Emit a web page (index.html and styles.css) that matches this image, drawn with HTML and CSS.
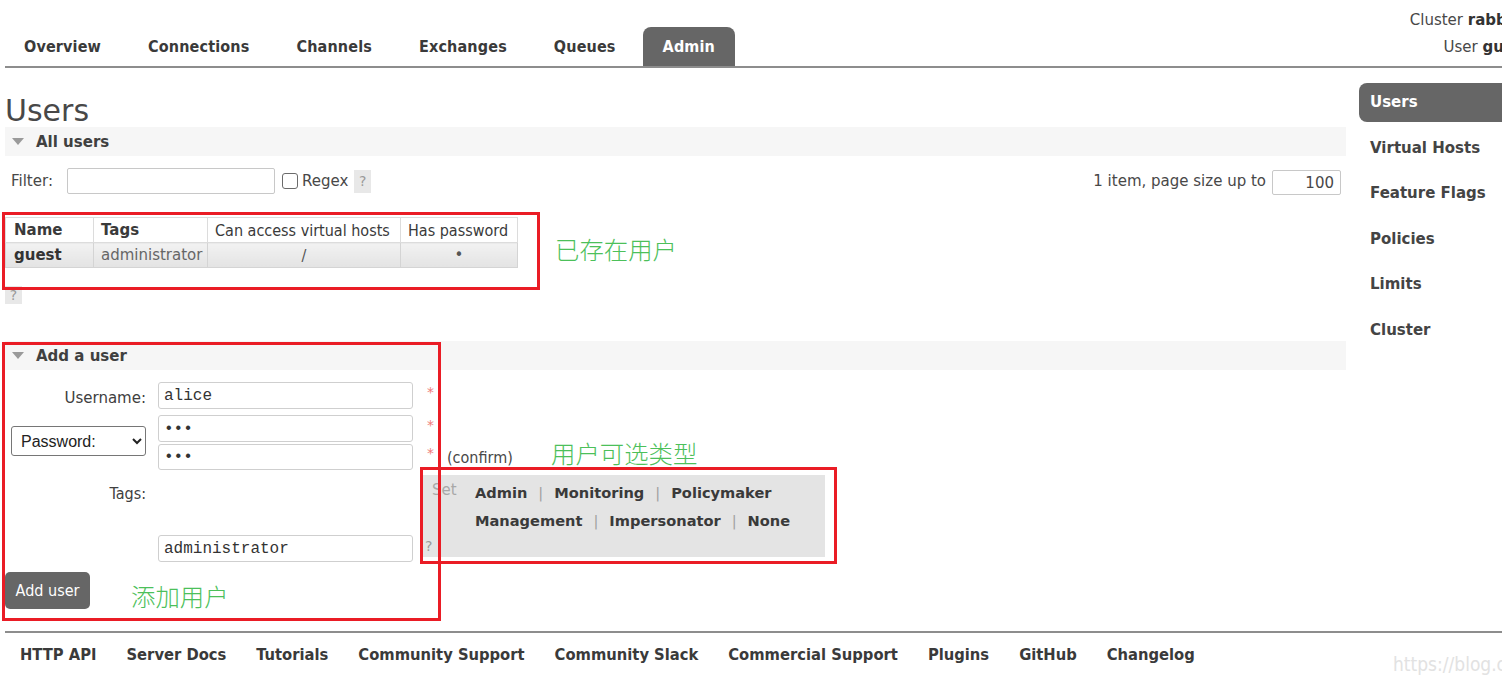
FILE: index.html
```html
<!DOCTYPE html>
<html lang="en">
<head>
<meta charset="utf-8">
<title>RabbitMQ Management - Users</title>
<link rel="stylesheet" href="styles.css">
</head>
<body>
<div class="page">
  <header class="top">
    <ul class="tabs">
      <li>Overview</li>
      <li>Connections</li>
      <li>Channels</li>
      <li>Exchanges</li>
      <li>Queues</li>
      <li class="active">Admin</li>
    </ul>
    <div class="login">
      <div class="login-line">Cluster <b>rabbit@my-rabbit</b></div>
      <div class="login-line second">User <b>guest</b> Log out</div>
    </div>
  </header>

  <div class="layout">
    <main class="main">
      <h1 class="title">Users</h1>

      <section>
        <h2 class="sec-head"><span class="tri"></span>All users</h2>
        <div class="filter-row">
          <div class="filter-left">
            <span class="filter-label">Filter:</span>
            <input class="filter-input" type="text">
            <span class="chk"></span>
            <span class="regex">Regex</span>
            <span class="help help-tall">?</span>
          </div>
          <div class="filter-right">
            <span>1 item, page size up to</span>
            <input class="page-size" type="text" value="100">
          </div>
        </div>

        <table class="list">
          <thead>
            <tr>
              <th class="c-name">Name</th>
              <th class="c-tags">Tags</th>
              <th class="c-vh cond">Can access virtual hosts</th>
              <th class="c-pw cond">Has password</th>
            </tr>
          </thead>
          <tbody>
            <tr>
              <td class="strong">guest</td>
              <td class="muted">administrator</td>
              <td class="center cond">/</td>
              <td class="center">&bull;</td>
            </tr>
          </tbody>
        </table>
        <span class="help help-block">?</span>
      </section>

      <section class="add">
        <h2 class="sec-head"><span class="tri"></span>Add a user</h2>
        <div class="form">
          <label class="lbl lbl-user">Username:</label>
          <input class="fld f-user" type="text" value="alice">
          <span class="star s1">*</span>

          <select class="pw-select">
            <option>Password:</option>
            <option>Password hash:</option>
            <option>No password</option>
          </select>
          <input class="fld f-pw1" type="password" value="123">
          <span class="star s2">*</span>
          <input class="fld f-pw2" type="password" value="123">
          <span class="confirm s3"><span class="star">*</span><span class="cond conf-text">(confirm)</span></span>

          <label class="lbl lbl-tags cond">Tags:</label>
          <input class="fld f-tags" type="text" value="administrator">
          <div class="tagbox">
            <span class="set">Set</span>
            <div class="tag-links">
              <span class="tl">Admin</span><span class="sep">|</span><span class="tl">Monitoring</span><span class="sep">|</span><span class="tl">Policymaker</span>
            </div>
            <div class="tag-links row2">
              <span class="tl">Management</span><span class="sep">|</span><span class="tl">Impersonator</span><span class="sep">|</span><span class="tl">None</span>
            </div>
            <span class="tag-help">?</span>
          </div>
        </div>
        <button class="btn cond" type="button">Add user</button>
      </section>
    </main>

    <nav class="side">
      <ul>
        <li class="active">Users</li>
        <li>Virtual Hosts</li>
        <li>Feature Flags</li>
        <li>Policies</li>
        <li>Limits</li>
        <li>Cluster</li>
      </ul>
    </nav>
  </div>

  <footer class="foot">
    <span>HTTP API</span>
    <span>Server Docs</span>
    <span>Tutorials</span>
    <span>Community Support</span>
    <span>Community Slack</span>
    <span>Commercial Support</span>
    <span>Plugins</span>
    <span>GitHub</span>
    <span>Changelog</span>
  </footer>
</div>

<div class="mark box1"></div>
<div class="mark box2"></div>
<div class="mark box3"></div>
<div class="note n1">已存在用户</div>
<div class="note n2">用户可选类型</div>
<div class="note n3">添加用户</div>
<div class="watermark">https://blog.csdn.net/</div>
</body>
</html>
```

FILE: styles.css
```css
* { box-sizing: border-box; }

html, body { margin: 0; padding: 0; }

body {
  width: 1502px;
  height: 684px;
  overflow: hidden;
  position: relative;
  background: #fff;
  color: #484848;
  font-family: "DejaVu Sans", Verdana, sans-serif;
  font-size: 15px;
}

.cond {
  font-family: "DejaVu Sans Condensed", "DejaVu Sans", sans-serif;
  font-stretch: condensed;
  font-size: 16px;
}

.page { padding-left: 5px; }

/* ---------- header ---------- */
.top {
  display: flex;
  height: 68px;
  border-bottom: 2px solid #8d8d8d;
}

.tabs {
  list-style: none;
  margin: 27px 0 0 -1px;
  padding: 0;
  display: flex;
  gap: 7px;
}

.tabs li {
  font-family: "DejaVu Sans Condensed", "DejaVu Sans", sans-serif;
  font-stretch: condensed;
  font-weight: bold;
  font-size: 16px;
  letter-spacing: 0.15px;
  color: #3a3a3a;
  height: 39px;
  line-height: 39px;
  padding: 0 20px;
  border-radius: 8px 8px 0 0;
}

.tabs li.active { background: #666; color: #fff; }

.login {
  flex: none;
  margin-left: auto;
  margin-right: -115px;
  padding-top: 7px;
  display: flex;
  flex-direction: column;
  align-items: flex-end;
  white-space: nowrap;
  line-height: 27px;
}

.login b { color: #333; }
.login-line.second { margin-right: 26px; }

/* ---------- layout ---------- */
.layout {
  display: grid;
  grid-template-columns: 1341px 1fr;
  column-gap: 13px;
}

.title {
  margin: 26px 0 0;
  font-size: 30px;
  font-weight: normal;
  line-height: 33px;
  color: #484848;
}

.sec-head {
  margin: 0;
  height: 29px;
  display: flex;
  align-items: center;
  background: #f6f6f6;
  font-size: 15px;
  font-weight: bold;
  color: #404040;
}

.tri {
  width: 0;
  height: 0;
  border-left: 6px solid transparent;
  border-right: 6px solid transparent;
  border-top: 7px solid #9a9a9a;
  margin: 0 12px 0 7px;
}

/* ---------- filter ---------- */
.filter-row {
  margin-top: 12px;
  height: 26px;
  display: flex;
  justify-content: space-between;
  align-items: center;
  padding: 0 5px 0 6px;
}

.filter-left, .filter-right { display: flex; align-items: center; }

.filter-input {
  width: 208px;
  height: 26px;
  margin-left: 14px;
  border: 1px solid #c8c8c8;
  border-radius: 2px;
}

.chk {
  width: 16px;
  height: 16px;
  margin-left: 7px;
  border: 1px solid #6b6b6b;
  border-radius: 3px;
  background: #fff;
}

.regex { margin-left: 4px; }

.help {
  display: inline-flex;
  align-items: center;
  justify-content: center;
  width: 17px;
  background: #e8e8e8;
  color: #9a9a9a;
  font-size: 14px;
}

.help-tall { height: 23px; margin-left: 6px; }

.page-size {
  width: 69px;
  height: 25px;
  margin: 3px 0 0 6px;
  border: 1px solid #c8c8c8;
  border-radius: 2px;
  text-align: right;
  padding-right: 6px;
  font-family: "DejaVu Sans", sans-serif;
  font-size: 15px;
  color: #484848;
}

/* ---------- table ---------- */
.list {
  margin-top: 23px;
  border-collapse: collapse;
  table-layout: fixed;
  width: 512px;
}

.list th, .list td {
  height: 25px;
  padding: 0 7px;
  border: 1px solid #dcdcdc;
  text-align: left;
  white-space: nowrap;
}

.list th { background: #fff; font-weight: normal; color: #3a3a3a; }
.list th.c-name, .list th.c-tags { font-weight: bold; }
.list th.c-name { width: 88px; padding-left: 8px; }
.list th.c-tags { width: 114px; }
.list th.c-vh { width: 193px; }
.list th.c-pw { width: 117px; }

.list td {
  background: linear-gradient(#f2f2f2, #e3e3e3);
  border-color: #d4d4d4;
}

.list td.strong { font-weight: bold; color: #333; padding-left: 8px; }
.list td.muted { color: #666; }
.list td.center { text-align: center; color: #555; }

.help-block { display: flex; height: 18px; margin-top: 18px; }

/* ---------- add user form ---------- */
.add { margin-top: 37px; }

.form {
  display: grid;
  grid-template-columns: 135px 267px auto;
  padding: 12px 0 0 6px;
  align-items: center;
}

.lbl { text-align: right; color: #404040; }

.fld {
  margin-left: 12px;
  width: 255px;
  height: 27px;
  border: 1px solid #cfcfcf;
  border-radius: 3px;
  padding: 0 5px;
  font-family: "Liberation Mono", "Courier New", monospace;
  font-size: 16px;
  color: #333;
}

.lbl-user { grid-row: 1; grid-column: 1; margin-top: 4px; }
.f-user { grid-row: 1; grid-column: 2; }
.s1 { grid-row: 1; grid-column: 3; }

.pw-select {
  grid-row: 2 / span 2;
  grid-column: 1;
  width: 135px;
  height: 30px;
  margin-top: 3px;
  padding-left: 5px;
  font-family: "Liberation Sans", Arial, sans-serif;
  font-size: 16px;
  color: #222;
  border: 1px solid #767676;
  border-radius: 3px;
  background: #fff;
}

.f-pw1 { grid-row: 2; grid-column: 2; margin-top: 6px; }
.s2 { grid-row: 2; grid-column: 3; margin-top: 6px; }
.f-pw2 { grid-row: 3; grid-column: 2; margin-top: 2px; height: 26px; }
.s3 { grid-row: 3; grid-column: 3; margin-top: 2px; }

.star {
  color: #f07a7a;
  font-size: 14px;
  padding-left: 14px;
  position: relative;
  top: -4px;
}

.confirm { display: flex; align-items: center; }
.confirm .star { padding-left: 0; margin-left: 14px; }
.conf-text { margin-left: 13px; color: #484848; }

.lbl-tags { grid-row: 4; grid-column: 1; align-self: start; margin-top: 14px; }
.f-tags { grid-row: 4; grid-column: 2; align-self: end; }

.tagbox {
  grid-row: 4;
  grid-column: 3;
  margin: 5px 0 5px 9px;
  width: 403px;
  height: 82px;
  background: #e4e4e4;
  padding: 3px 0 0 3px;
  display: grid;
  grid-template-columns: 50px auto;
  grid-template-rows: 28px 28px 23px;
  align-items: center;
}

.set { grid-row: 1; grid-column: 1; padding-left: 7px; color: #a8a8a8; align-self: start; margin-top: 3px; }
.tag-links { grid-row: 1; grid-column: 2; white-space: nowrap; font-size: 14.6px; }
.tag-links.row2 { grid-row: 2; }
.tl { font-weight: bold; color: #3a3a3a; }
.sep { color: #a0a0a0; margin: 0 11px; }
.tag-help { grid-row: 3; grid-column: 1; color: #9a9a9a; font-size: 14px; }

.btn {
  display: block;
  margin-top: 10px;
  width: 85px;
  height: 37px;
  border: none;
  border-radius: 5px;
  background: #666;
  color: #fff;
  padding: 0;
}

/* ---------- side menu ---------- */
.side ul {
  list-style: none;
  margin: 15px -20px 0 0;
  padding: 0;
}

.side li {
  height: 39px;
  line-height: 39px;
  margin-bottom: 6.5px;
  padding-left: 11px;
  font-weight: bold;
  color: #444;
  border-radius: 8px 0 0 8px;
}

.side li.active { background: #666; color: #fff; }

/* ---------- footer ---------- */
.foot {
  margin-top: 22px;
  border-top: 2px solid #8d8d8d;
  padding: 10px 0 0 15px;
  display: flex;
  gap: 30px;
  line-height: 24px;
  font-family: "DejaVu Sans Condensed", "DejaVu Sans", sans-serif;
  font-stretch: condensed;
  font-weight: bold;
  font-size: 16.4px;
  color: #3a3a3a;
  white-space: nowrap;
}

/* ---------- annotations (overlay) ---------- */
.mark {
  position: absolute;
  border: 3px solid #ea1c25;
  pointer-events: none;
}

.box1 { left: 2px; top: 212px; width: 538px; height: 78px; }
.box2 { left: 2px; top: 342px; width: 439px; height: 279px; }
.box3 { left: 420px; top: 467px; width: 417px; height: 97px; }

.note {
  position: absolute;
  font-family: "Noto Sans CJK SC", sans-serif;
  font-weight: 300;
  font-size: 24.4px;
  line-height: 24px;
  color: #4cc05a;
  white-space: nowrap;
}

.n1 { left: 555px; top: 237px; }
.n2 { left: 551px; top: 441px; }
.n3 { left: 131px; top: 584px; }

.watermark {
  position: absolute;
  left: 1393px;
  top: 653px;
  font-family: "DejaVu Sans Condensed", "DejaVu Sans", sans-serif;
  font-stretch: condensed;
  font-size: 19px;
  color: #e2e2e2;
  white-space: nowrap;
}
```
